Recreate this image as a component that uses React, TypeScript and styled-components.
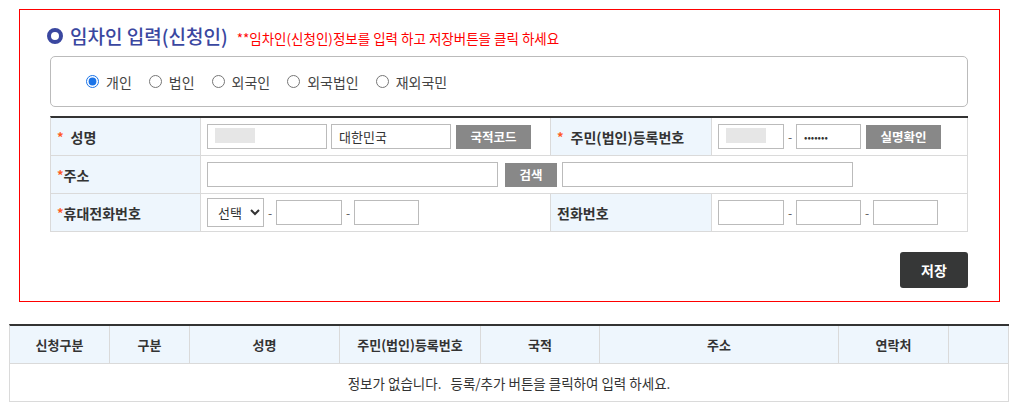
import React from 'react';
import styled, { createGlobalStyle } from 'styled-components';

const GlobalStyle = createGlobalStyle`
  body {
    margin: 0;
    padding-top: 9px;
    background: #fff;
    font-family: "Noto Sans CJK KR", "Noto Sans", sans-serif;
    color: #333;
  }
  * { box-sizing: border-box; }
`;

const Panel = styled.div`
  margin-left: 19px;
  width: 981px;
  border: 1px solid red;
  padding: 15px 31px 13px 30px;
`;

const TitleRow = styled.div`
  display: flex;
  align-items: center;
  height: 22px;
`;

const TitleIcon = styled.span`
  width: 16px;
  height: 16px;
  border: 4px solid #3a47a0;
  border-radius: 50%;
  margin: 0 7px 0 -3px;
`;

const Title = styled.h2`
  margin: 0;
  font-size: 19px;
  font-weight: 500;
  color: #3a47a0;
  line-height: 22px;
`;

const Note = styled.span`
  margin-left: 9px;
  font-size: 13.5px;
  color: #ff0000;
  padding-top: 3px;
`;

const RadioBox = styled.div`
  margin-top: 9px;
  height: 51px;
  border: 1px solid #bbb;
  border-radius: 5px;
  display: flex;
  align-items: center;
  padding-left: 34px;
  font-size: 14px;
  color: #444;
`;

const RadioLabel = styled.label`
  display: flex;
  align-items: center;
  margin-right: 16px;
  input {
    margin: 0 7px 0 1px;
    width: 13px;
    height: 13px;
    accent-color: #1a73e8;
  }
`;

const FormGrid = styled.div`
  margin-top: 9px;
  display: grid;
  grid-template-columns: 150px 350px 161px 256px;
  border-top: 2px solid #333;
  border-left: 1px solid #dadada;
`;

const Cell = styled.div<{ $head?: boolean; $span?: number }>`
  height: 38px;
  display: flex;
  align-items: center;
  border-right: 1px solid #dadada;
  border-bottom: 1px solid #dadada;
  background: ${(p) => (p.$head ? '#eef6fd' : '#fff')};
  padding: 0 ${(p) => (p.$head ? '6px' : '6px')};
  font-size: ${(p) => (p.$head ? '14px' : '13px')};
  font-weight: ${(p) => (p.$head ? 700 : 400)};
  grid-column: ${(p) => (p.$span ? `span ${p.$span}` : 'auto')};
  gap: ${(p) => (p.$head ? '0' : '4px')};
`;

const Star = styled.span<{ $gap?: boolean }>`
  color: #ff5a1f;
  font-size: 13px;
  margin-right: ${(p) => (p.$gap ? '7px' : '0')};
`;

const TextBox = styled.input<{ $w: number; $masked?: boolean }>`
  width: ${(p) => p.$w}px;
  height: 25px;
  border: 1px solid #bbb;
  padding: 0 7px;
  font-family: inherit;
  font-size: 13px;
  color: #333;
  outline: none;
  background: ${(p) =>
    p.$masked ? 'linear-gradient(#e6e6e6, #e6e6e6) no-repeat 7px 3px / 40px 15px' : '#fff'};
  &[type='password'] {
    font-size: 10px;
    letter-spacing: 0;
  }
`;

const GrayButton = styled.button<{ $w: number }>`
  width: ${(p) => p.$w}px;
  height: 24px;
  margin-left: 1px;
  border: 0;
  background: #888;
  color: #fff;
  font-family: inherit;
  font-size: 12.5px;
  font-weight: 700;
  padding: 0;
`;

const Dash = styled.span`
  width: 4px;
  text-align: center;
  font-size: 12px;
  color: #555;
`;

const Select = styled.select`
  width: 57px;
  height: 29px;
  border: 1px solid #bbb;
  background: #fff;
  font-family: inherit;
  font-size: 13px;
  color: #333;
  padding: 0 2px 0 6px;
`;

const Actions = styled.div`
  display: flex;
  justify-content: flex-end;
  margin-top: 20px;
`;

const SaveButton = styled.button`
  width: 68px;
  height: 36px;
  border: 0;
  border-radius: 3px;
  background: #363737;
  color: #fff;
  font-family: inherit;
  font-size: 14px;
  font-weight: 700;
`;

const ListGrid = styled.div`
  margin: 22px 0 0 9px;
  width: 1000px;
  display: grid;
  grid-template-columns: 100px 80px 150px 141px 119px 239px 110px 60px;
  border-top: 2px solid #333;
  border-left: 1px solid #dadada;
`;

const ListCell = styled.div<{ $head?: boolean; $full?: boolean }>`
  height: 38px;
  display: flex;
  align-items: center;
  justify-content: center;
  border-right: 1px solid #dadada;
  border-bottom: 1px solid #dadada;
  background: ${(p) => (p.$head ? '#eef6fd' : '#fff')};
  font-size: ${(p) => (p.$head ? '13px' : '13.5px')};
  font-weight: ${(p) => (p.$head ? 700 : 400)};
  color: #333;
  grid-column: ${(p) => (p.$full ? '1 / -1' : 'auto')};
  white-space: pre;
`;

const kinds = ['개인', '법인', '외국인', '외국법인', '재외국민'];
const columns = ['신청구분', '구분', '성명', '주민(법인)등록번호', '국적', '주소', '연락처', ''];

export default function App() {
  return (
    <>
      <GlobalStyle />
      <Panel>
        <TitleRow>
          <TitleIcon />
          <Title>임차인 입력(신청인)</Title>
          <Note>**임차인(신청인)정보를 입력 하고 저장버튼을 클릭 하세요</Note>
        </TitleRow>

        <RadioBox>
          {kinds.map((k, i) => (
            <RadioLabel key={k}>
              <input type="radio" name="kind" defaultChecked={i === 0} />
              {k}
            </RadioLabel>
          ))}
        </RadioBox>

        <FormGrid>
          <Cell $head>
            <Star $gap>*</Star>성명
          </Cell>
          <Cell>
            <TextBox $w={120} $masked />
            <TextBox $w={120} defaultValue="대한민국" />
            <GrayButton $w={75}>국적코드</GrayButton>
          </Cell>
          <Cell $head>
            <Star $gap>*</Star>주민(법인)등록번호
          </Cell>
          <Cell>
            <TextBox $w={66} $masked />
            <Dash>-</Dash>
            <TextBox $w={65} type="password" defaultValue="1234567" />
            <GrayButton $w={75}>실명확인</GrayButton>
          </Cell>

          <Cell $head>
            <Star>*</Star>주소
          </Cell>
          <Cell $span={3}>
            <TextBox $w={291} />
            <GrayButton $w={52} style={{ marginLeft: 3 }}>검색</GrayButton>
            <TextBox $w={291} style={{ marginLeft: 1 }} />
          </Cell>

          <Cell $head>
            <Star>*</Star>휴대전화번호
          </Cell>
          <Cell>
            <Select defaultValue="">
              <option value="">선택</option>
              <option>010</option>
              <option>011</option>
            </Select>
            <Dash>-</Dash>
            <TextBox $w={66} />
            <Dash>-</Dash>
            <TextBox $w={65} />
          </Cell>
          <Cell $head>전화번호</Cell>
          <Cell>
            <TextBox $w={66} />
            <Dash>-</Dash>
            <TextBox $w={65} />
            <Dash>-</Dash>
            <TextBox $w={65} />
          </Cell>
        </FormGrid>

        <Actions>
          <SaveButton>저장</SaveButton>
        </Actions>
      </Panel>

      <ListGrid>
        {columns.map((c, i) => (
          <ListCell $head key={i}>
            {c}
          </ListCell>
        ))}
        <ListCell $full>{'정보가 없습니다.   등록/추가 버튼을 클릭하여 입력 하세요.'}</ListCell>
      </ListGrid>
    </>
  );
}
